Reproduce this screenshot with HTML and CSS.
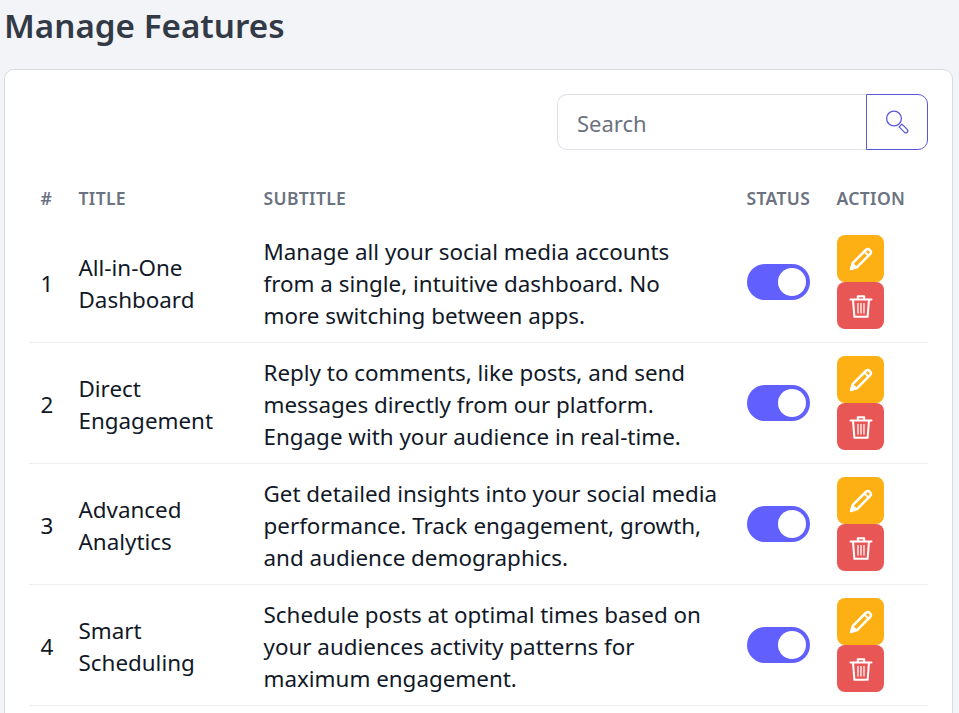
FILE: index.html
```html
<!DOCTYPE html>
<html lang="en">
<head>
<meta charset="utf-8">
<title>Manage Features</title>
<link rel="stylesheet" href="styles.css">
</head>
<body>
<svg class="sprite" aria-hidden="true">
  <symbol id="i-edit" viewBox="0 0 24 24">
    <path class="ic ic-bold" d="M2 22L3.9 15.9L16.8 3a2.8 2.8 0 0 1 3.9 0l.3.3a2.8 2.8 0 0 1 0 3.9L8.1 20.1Z"/>
    <path class="ic" d="M15.4 4.6l4 4"/>
    <path class="if" d="M1.2 22.8l2.2-7.6 5.4 5.4z"/>
  </symbol>
  <symbol id="i-del" viewBox="0 0 24 24">
    <path class="ic" d="M1.5 5.5h21M8.8 5V2.2h6.4V5M4 5.5l1.4 17.3h13.2L20 5.5"/>
    <path class="ib" d="M9 9v10.5M12 9v10.5M15 9v10.5"/>
  </symbol>
</svg>
<main class="page">
  <h1 class="page-title">Manage Features</h1>
  <section class="card">
    <form class="search">
      <input class="search-input" type="text" placeholder="Search">
      <button class="search-btn" type="button" aria-label="Search">
        <svg class="icon-search" viewBox="0 0 24 24" fill="none" stroke="currentColor" stroke-width="1.3"><circle cx="9" cy="8.5" r="7.4"/><path d="M14.1 16.9L16.9 14.1L22.4 19.6A2 2 0 0 1 19.6 22.4Z" stroke-linejoin="round"/></svg>
      </button>
    </form>
    <table class="table">
      <thead>
        <tr><th class="col-num">#</th><th class="col-title">Title</th><th class="col-sub">Subtitle</th><th class="col-status">Status</th><th class="col-action">Action</th></tr>
      </thead>
      <tbody>
        <tr>
          <td class="cell-text">1</td><td class="cell-text">All-in-One Dashboard</td>
          <td class="cell-text cell-sub">Manage all your social media accounts from a single, intuitive dashboard. No more switching between apps.</td>
          <td><span class="toggle"><span class="knob"></span></span></td>
          <td><div class="actions">
            <button class="btn btn-edit" type="button" aria-label="Edit"><svg class="icon"><use href="#i-edit"/></svg></button>
            <button class="btn btn-del" type="button" aria-label="Delete"><svg class="icon"><use href="#i-del"/></svg></button>
          </div></td>
        </tr>
        <tr>
          <td class="cell-text">2</td><td class="cell-text">Direct Engagement</td>
          <td class="cell-text cell-sub">Reply to comments, like posts, and send messages directly from our platform. Engage with your audience in real-time.</td>
          <td><span class="toggle"><span class="knob"></span></span></td>
          <td><div class="actions">
            <button class="btn btn-edit" type="button" aria-label="Edit"><svg class="icon"><use href="#i-edit"/></svg></button>
            <button class="btn btn-del" type="button" aria-label="Delete"><svg class="icon"><use href="#i-del"/></svg></button>
          </div></td>
        </tr>
        <tr>
          <td class="cell-text">3</td><td class="cell-text">Advanced Analytics</td>
          <td class="cell-text cell-sub">Get detailed insights into your social media performance. Track engagement, growth, and audience demographics.</td>
          <td><span class="toggle"><span class="knob"></span></span></td>
          <td><div class="actions">
            <button class="btn btn-edit" type="button" aria-label="Edit"><svg class="icon"><use href="#i-edit"/></svg></button>
            <button class="btn btn-del" type="button" aria-label="Delete"><svg class="icon"><use href="#i-del"/></svg></button>
          </div></td>
        </tr>
        <tr>
          <td class="cell-text">4</td><td class="cell-text">Smart Scheduling</td>
          <td class="cell-text cell-sub">Schedule posts at optimal times based on your audiences activity patterns for maximum engagement.</td>
          <td><span class="toggle"><span class="knob"></span></span></td>
          <td><div class="actions">
            <button class="btn btn-edit" type="button" aria-label="Edit"><svg class="icon"><use href="#i-edit"/></svg></button>
            <button class="btn btn-del" type="button" aria-label="Delete"><svg class="icon"><use href="#i-del"/></svg></button>
          </div></td>
        </tr>
      </tbody>
    </table>
  </section>
</main>
</body>
</html>
```
FILE: styles.css
```css
* { box-sizing: border-box; }
html, body { margin: 0; height: 100%; overflow: hidden; }
body { background: #f3f4f8; font-family: "Noto Sans", "Open Sans", sans-serif; color: #111827; }
.sprite { display: none; }
.page { padding: 0 6px 0 4px; }
.page-title { margin: 0; height: 69px; padding: 4px 0 0; font-size: 33.2px; line-height: 44px; font-weight: 600; color: #323a46; }
.card { background: #fff; border: 1px solid #d8dbe0; border-radius: 10px; padding: 24px; }
.search { display: flex; justify-content: flex-end; margin-bottom: 24px; }
.search-input { width: 309px; height: 56px; padding: 2px 19px 0; border: 1px solid #dfe1ea; border-right: 0; border-radius: 10px 0 0 10px; font: 22px "Noto Sans", sans-serif; background: #fff; outline: 0; }
.search-input::placeholder { color: #6b7280; opacity: 1; }
.search-btn { width: 62px; height: 56px; padding: 0; display: flex; align-items: center; justify-content: center; background: #fff; border: 1px solid #5a57d9; border-radius: 0 10px 10px 0; color: #5a57d9; }
.icon-search { width: 24px; height: 24px; }
.table { width: 899px; border-collapse: collapse; table-layout: fixed; font-size: 22.4px; line-height: 32px; }
.col-num { width: 38px; }
.col-title { width: 185px; }
.col-sub { width: 483px; }
.col-status { width: 90px; }
.col-action { width: 103px; }
th { padding: 12px 12px 12px 11.5px; text-align: left; font-size: 17.5px; line-height: 24px; font-weight: 600; letter-spacing: 0.35px; text-transform: uppercase; color: #6b7280; }
td { padding: 12px; vertical-align: middle; border-bottom: 1px solid #eceef1; }
.cell-text { padding: 14px 12px 10px 11.5px; }
.cell-sub { padding-right: 15px; }
.toggle { display: block; width: 63px; height: 36px; border-radius: 18px; background: #6160ff; position: relative; }
.knob { position: absolute; top: 4px; right: 4px; width: 28px; height: 28px; border-radius: 50%; background: #fff; }
.actions { display: flex; flex-direction: column; width: 47px; }
.btn { width: 47px; height: 47px; padding: 0; border: 0; border-radius: 8px; display: flex; align-items: center; justify-content: center; }
.btn-edit { background: #fdb014; }
.btn-del { background: #e95656; }
.icon { width: 24px; height: 24px; }
.ic { fill: none; stroke: #fff; stroke-width: 2; stroke-linejoin: round; stroke-linecap: round; }
.ic-bold { stroke-width: 2.5; }
.ib { fill: none; stroke: #fff; stroke-width: 1.7; opacity: 0.75; }
.if { fill: #fff; }
```
